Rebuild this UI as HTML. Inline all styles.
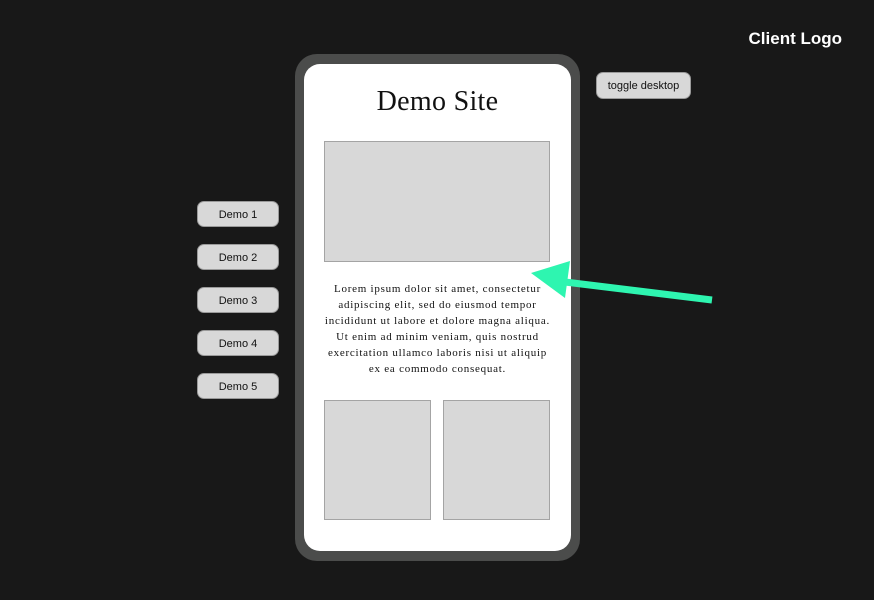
<!DOCTYPE html>
<html><head><style>
body{margin:0;width:874px;height:600px;background:#181818;position:relative;overflow:hidden;font-family:"Liberation Sans",sans-serif}
.a{position:absolute;box-sizing:border-box}
.btn{background:#d8d8d8;border:1px solid #9a9a9a;border-radius:7px;font-size:11px;color:#111;text-align:center;line-height:26px}
.g{background:#d8d8d8;border:1px solid #a4a4a4}
</style></head><body>
<div class="a" style="right:32px;top:29px;color:#fff;font-weight:bold;font-size:17px">Client Logo</div>
<div class="a" style="left:295px;top:54px;width:285px;height:507px;background:#4b4c4b;border-radius:22px"></div>
<div class="a" style="left:304px;top:64px;width:267px;height:487px;background:#fff;border-radius:16px"></div>
<div class="a" style="left:304px;top:86px;width:267px;text-align:center;font-family:'Liberation Serif',serif;font-size:28px;letter-spacing:0.3px;color:#111">Demo Site</div>
<div class="a g" style="left:324px;top:141px;width:226px;height:121px"></div>
<div class="a" style="left:304px;top:281px;width:267px;text-align:center;font-family:'Liberation Serif',serif;font-size:11px;letter-spacing:0.75px;line-height:16px;color:#111;white-space:nowrap">Lorem ipsum dolor sit amet, consectetur<br>adipiscing elit, sed do eiusmod tempor<br>incididunt ut labore et dolore magna aliqua.<br>Ut enim ad minim veniam, quis nostrud<br>exercitation ullamco laboris nisi ut aliquip<br>ex ea commodo consequat.</div>
<div class="a g" style="left:324px;top:400px;width:107px;height:120px"></div>
<div class="a g" style="left:443px;top:400px;width:107px;height:120px"></div>
<div class="a btn" style="left:596px;top:72px;width:95px;height:27px">toggle desktop</div>
<div class="a btn" style="left:197px;top:201px;width:82px;height:26px">Demo 1</div>
<div class="a btn" style="left:197px;top:244px;width:82px;height:26px">Demo 2</div>
<div class="a btn" style="left:197px;top:287px;width:82px;height:26px">Demo 3</div>
<div class="a btn" style="left:197px;top:330px;width:82px;height:26px">Demo 4</div>
<div class="a btn" style="left:197px;top:373px;width:82px;height:26px">Demo 5</div>
<svg class="a" style="left:0;top:0" width="874" height="600">
<line x1="565" y1="282" x2="712" y2="300" stroke="#2ef5b0" stroke-width="7"/>
<polygon points="531,273 570,261 565,298" fill="#2ef5b0"/>
</svg>
</body></html>
